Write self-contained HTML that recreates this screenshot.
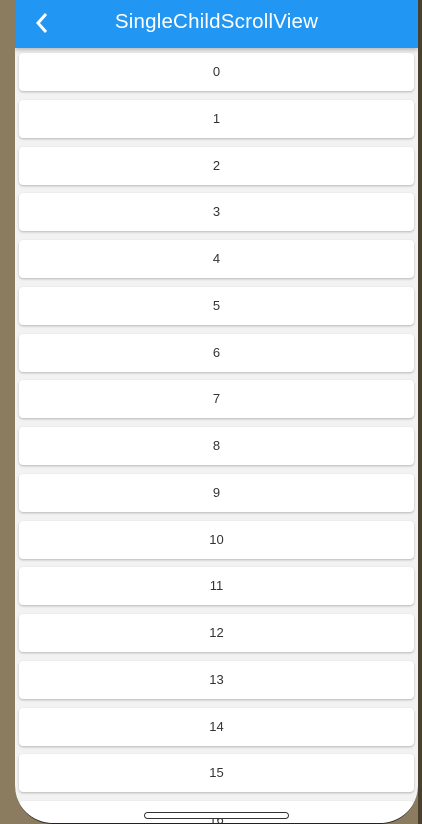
<!DOCTYPE html><html><head><style>
body{margin:0;width:422px;height:824px;overflow:hidden;background:#8b7b5f;font-family:"Liberation Sans",sans-serif;position:relative}
.scr{position:absolute;left:15px;top:0;width:403px;height:823px;background:#f2f2f2;border-radius:0 0 38px 38px;overflow:hidden;border-bottom:1px solid #222}
.bar{position:absolute;left:0;top:0;width:403px;height:48px;background:#2196f3;box-shadow:0 2px 4px rgba(0,0,0,.25);z-index:2}
.bar span{position:absolute;left:0;right:0;top:10px;text-align:center;color:#fff;font-size:20.5px;letter-spacing:0.2px}
.card{position:absolute;left:4px;width:395px;height:38px;background:#fff;border-radius:4px;box-shadow:0 1px 2px rgba(0,0,0,.25);text-align:center;line-height:38px;font-size:13px;color:#333}
.home{position:absolute;left:129px;top:812px;width:143px;height:5px;border:1px solid #333;border-radius:4px;background:#fff;z-index:3}
.rt{position:absolute;right:0;top:0;width:4px;height:824px;background:#4a4030}
</style></head><body>
<div class="rt"></div>
<div class="scr">
<div class="bar"><svg style="position:absolute;left:20px;top:12px" width="14" height="22" viewBox="0 0 14 22"><path d="M11 2L3 11l8 9" stroke="#fff" stroke-width="3" fill="none"/></svg><span>SingleChildScrollView</span></div>
<div class="card" style="top:53px">0</div>
<div class="card" style="top:100px">1</div>
<div class="card" style="top:147px">2</div>
<div class="card" style="top:193px">3</div>
<div class="card" style="top:240px">4</div>
<div class="card" style="top:287px">5</div>
<div class="card" style="top:334px">6</div>
<div class="card" style="top:380px">7</div>
<div class="card" style="top:427px">8</div>
<div class="card" style="top:474px">9</div>
<div class="card" style="top:521px">10</div>
<div class="card" style="top:567px">11</div>
<div class="card" style="top:614px">12</div>
<div class="card" style="top:661px">13</div>
<div class="card" style="top:708px">14</div>
<div class="card" style="top:754px">15</div>
<div class="card" style="top:801px">16</div>
<div class="home" style="left:129px"></div>
</div>
</body></html>
